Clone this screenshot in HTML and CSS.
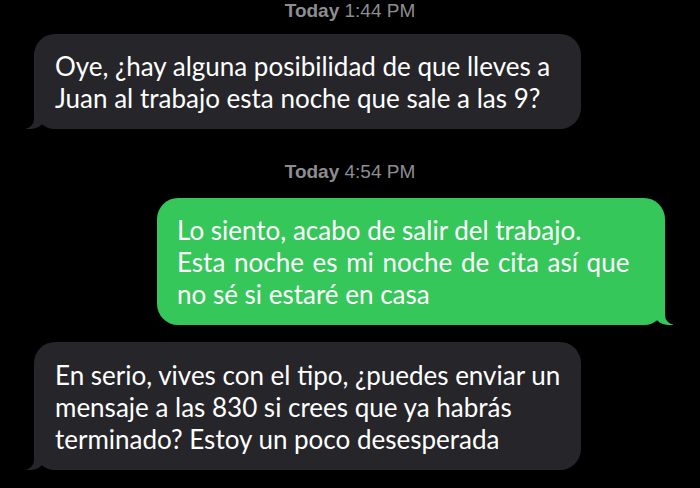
FILE: index.html
```html
<!DOCTYPE html>
<html lang="es">
  <head>
    <meta charset="UTF-8" />
    <meta name="viewport" content="width=device-width, initial-scale=1.0" />
    <title>Mensajes</title>
    <link rel="stylesheet" href="styles.css">
  </head>
  <body>
    <div class="thread">
      <!-- first block -->
      <div class="stamp stamp-top"><b>Today</b> 1:44 PM</div>
      <div class="bubble incoming first">
        Oye, ¿hay alguna posibilidad de que lleves a<br />
        Juan al trabajo esta noche que sale a las 9?
      </div>

      <!-- second block -->
      <div class="stamp"><b>Today</b> 4:54 PM</div>
      <div class="bubble outgoing">
        Lo siento, acabo de salir del trabajo.<br />
        <span class="wide">Esta noche es mi noche de cita así que</span><br />
        no sé si estaré en casa
      </div>

      <div class="bubble incoming last">
        En serio, vives con el tipo, ¿puedes enviar un<br />
        mensaje a las 830 si crees que ya habrás<br />
        terminado? Estoy un poco desesperada
      </div>
    </div>
  </body>
</html>
```

FILE: styles.css
```css
/* General Styles */
body {
  margin: 0;
  padding: 0;
  background: #000000;
  color: #ffffff;
  font-family: "Lato", "Noto Sans", sans-serif;
  overflow: hidden;
}

.thread {
  display: flex;
  flex-direction: column;
  height: 488px;
}

/* Timestamps */
.stamp {
  text-align: center;
  font-family: "Liberation Sans", Arial, sans-serif;
  font-size: 19px;
  line-height: 20px;
  color: #8d8d92;
  margin-top: 33px;
}

.stamp b {
  font-weight: 700;
}

.stamp-top {
  margin-top: 0;
  line-height: 21px;
}

/* Bubbles */
.bubble {
  position: relative;
  box-sizing: border-box;
  font-size: 26px;
  line-height: 32px;
  padding: 16px 21px 15px;
  border-radius: 21px;
  white-space: nowrap;
}

.incoming {
  background: #262529;
  width: 547px;
  margin-left: 34px;
}

.first {
  margin-top: 13px;
}

.last {
  margin-top: 17px;
  padding-top: 17px;
}

.outgoing {
  background: #35c759;
  width: 508px;
  margin-left: auto;
  margin-right: 35px;
  margin-top: 16px;
  padding-left: 20px;
}

.wide {
  word-spacing: 2px;
}

/* Tails */
.bubble::before,
.bubble::after {
  content: "";
  position: absolute;
  bottom: 0;
  height: 20px;
}

.incoming::before {
  left: -8px;
  width: 20px;
  background: #262529;
  border-bottom-right-radius: 15px;
}

.incoming::after {
  left: -10px;
  width: 10px;
  background: #000000;
  border-bottom-right-radius: 10px;
}

.outgoing::before {
  right: -8px;
  width: 20px;
  background: #35c759;
  border-bottom-left-radius: 15px;
}

.outgoing::after {
  right: -10px;
  width: 10px;
  background: #000000;
  border-bottom-left-radius: 10px;
}
```
